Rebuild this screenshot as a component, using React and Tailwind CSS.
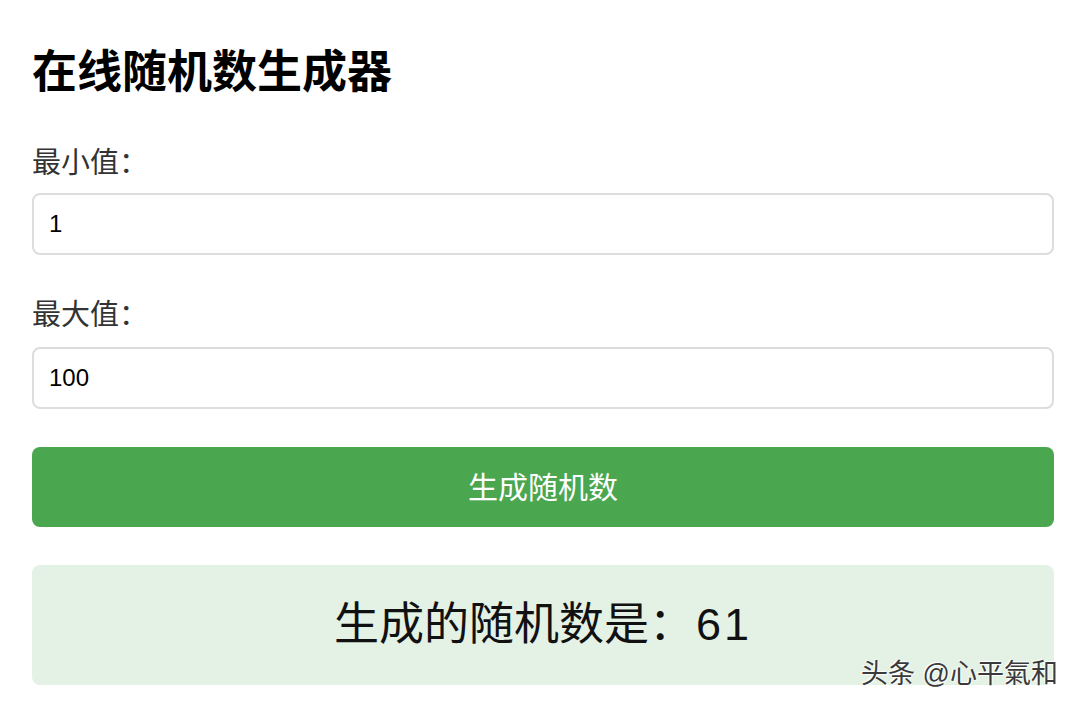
export default function App() {
  return (
    <div className="relative w-[1080px] h-[707px] bg-white overflow-hidden font-['Liberation_Sans','Noto_Sans_CJK_SC',sans-serif]">
      <div className="flex flex-col pl-[32px] pr-[26px] pt-[45px]">
        <h1 className="text-[45px] font-bold leading-[56px] text-black">在线随机数生成器</h1>

        <label className="mt-[47px] text-[29px] leading-[30px] text-[#333]">最小值：</label>
        <div className="mt-[15px] h-[62px] rounded-[8px] border-2 border-[#dddddd] flex items-center pl-[15px] text-[24px] text-black">
          1
        </div>

        <label className="mt-[45px] text-[29px] leading-[30px] text-[#333]">最大值：</label>
        <div className="mt-[17px] h-[62px] rounded-[8px] border-2 border-[#dddddd] flex items-center pl-[15px] text-[24px] text-black">
          100
        </div>

        <button className="mt-[38px] h-[80px] rounded-[8px] bg-[#4aa64f] text-white text-[30px] flex items-center justify-center">
          生成随机数
        </button>

        <div className="mt-[38px] h-[120px] rounded-[8px] bg-[#e3f2e5] flex items-center justify-center text-[45px] leading-[60px] text-[#111]">
          <span>生成的随机数是：</span>
          <span className="ml-[2px] tracking-[3px]">61</span>
        </div>
      </div>

      <div className="absolute right-[22px] top-[657px] text-[27px] leading-[34px] text-[#3a3a3a] [text-shadow:1px_1px_1px_#fff,-1px_-1px_1px_#fff]">
        头条 @心平氣和
      </div>
    </div>
  );
}
